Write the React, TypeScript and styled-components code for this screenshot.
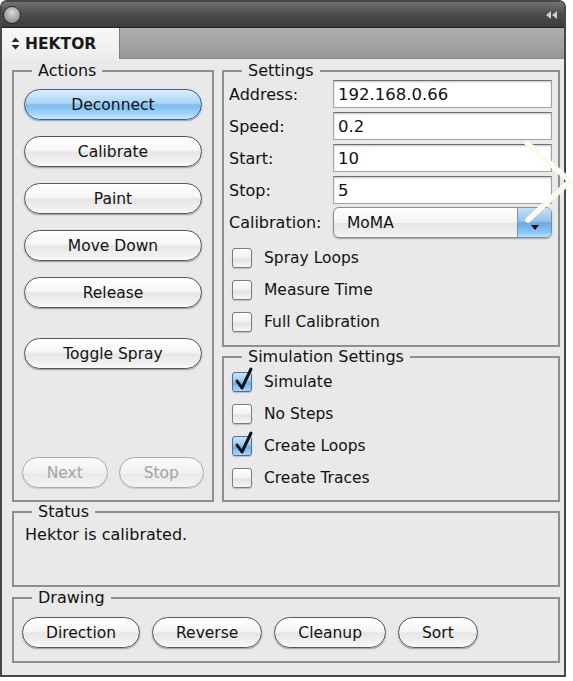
import React from 'react';
import styled, { createGlobalStyle, css } from 'styled-components';

const GlobalStyle = createGlobalStyle`
  html, body {
    margin: 0;
    padding: 0;
    background: #ffffff;
  }
  body {
    font-family: "DejaVu Sans", "Liberation Sans", sans-serif;
    color: #111;
  }
`;

const FONT = `"DejaVu Sans", "Liberation Sans", sans-serif`;

const Stage = styled.div`
  position: relative;
  width: 573px;
  height: 681px;
  overflow: hidden;
`;

const Window = styled.div`
  width: 566px;
  height: 677px;
  box-sizing: border-box;
  border: 2px solid #474747;
  border-radius: 7px 7px 0 0;
  display: flex;
  flex-direction: column;
  overflow: hidden;
  background: #e9e9e9;
`;

const TitleBar = styled.div`
  height: 26px;
  box-sizing: border-box;
  display: flex;
  align-items: center;
  justify-content: space-between;
  padding: 0 6px 0 1px;
  background: linear-gradient(#727272, #4d4d4d 45%, #3d3d3d);
  border-bottom: 1px solid #1f1f1f;
`;

const CloseDot = styled.span`
  width: 16px;
  height: 16px;
  border-radius: 50%;
  border: 1px solid #2a2a2a;
  background: radial-gradient(circle at 50% 35%, #dadada, #9a9a9a 65%, #6c6c6c);
`;

const TabStrip = styled.div`
  height: 31px;
  display: flex;
  background: linear-gradient(#b0b0b0, #979797);
  border-bottom: 1px solid #8a8a8a;
  box-sizing: border-box;
`;

const Tab = styled.div`
  width: 118px;
  display: flex;
  align-items: center;
  gap: 5px;
  padding-left: 9px;
  box-sizing: border-box;
  background: linear-gradient(#f8f8f8, #ececec);
  border-right: 1px solid #7c7c7c;
  margin-bottom: -1px;
  font: bold 15.5px ${FONT};
  color: #1a1a1a;
`;

const Panel = styled.div`
  flex: 1;
  display: flex;
  flex-direction: column;
  padding: 3px 4px 0 10px;
`;

const TopRow = styled.div`
  display: grid;
  grid-template-columns: 202px 338px;
  column-gap: 8px;
  height: 440px;
`;

const RightColumn = styled.div`
  display: flex;
  flex-direction: column;
  gap: 1px;
`;

const Group = styled.fieldset<{ $height?: number; $gapAbove?: number; $grow?: boolean }>`
  margin: ${p => p.$gapAbove ?? 0}px 0 0 0;
  padding: 0;
  min-width: 0;
  border: 2px solid #8e8e8e;
  display: flex;
  flex-direction: column;
  box-sizing: border-box;
  ${p => p.$grow && css`flex: 1;`}
  ${p =>
    p.$height !== undefined &&
    css`
      height: ${p.$height}px;
    `}
`;

const Legend = styled.legend`
  margin-left: 18px;
  padding: 0 6px;
  font: 16px/18px ${FONT};
  color: #111;
`;

const GroupBody = styled.div<{ $pad: string; $gap?: number }>`
  flex: 1;
  display: flex;
  flex-direction: column;
  padding: ${p => p.$pad};
  gap: ${p => p.$gap ?? 0}px;
`;

const PillButton = styled.button<{ $primary?: boolean; $wide?: boolean; $spaced?: boolean }>`
  height: 31px;
  padding: 0 23px;
  ${p => p.$wide && css`width: 100%;`}
  ${p => p.$spaced && css`margin-top: 14px;`}
  border-radius: 16px;
  border: 1px solid #575757;
  font: 15.5px ${FONT};
  color: #121212;
  cursor: pointer;
  background: linear-gradient(#ffffff 0%, #f6f6f6 45%, #e6e6e6 52%, #f1f1f1 85%, #fafafa 100%);
  box-shadow: 0 1px 1.5px rgba(0, 0, 0, 0.35);
  ${p =>
    p.$primary &&
    css`
      border-color: #3d5e8e;
      background: linear-gradient(#d9eefc 0%, #a9d5f6 45%, #7cbdf0 52%, #9fd1f7 80%, #c9ecfd 100%);
    `}
  &:disabled {
    color: #a2a2a2;
    border-color: #ababab;
    background: linear-gradient(#fbfbfb, #f1f1f1 50%, #eaeaea 52%, #f2f2f2);
    box-shadow: 0 1px 1px rgba(0, 0, 0, 0.12);
    cursor: default;
  }
`;

const ButtonPair = styled.div`
  margin: auto -2px 0 -2px;
  display: grid;
  grid-template-columns: 1fr 1fr;
  gap: 11px;
`;

const FormGrid = styled.div`
  display: grid;
  grid-template-columns: 104px 219px;
  grid-auto-rows: 28px;
  row-gap: 4px;
  align-items: center;
`;

const FieldLabel = styled.label`
  font: 16px ${FONT};
  color: #111;
`;

const Field = styled.input`
  height: 28px;
  width: 100%;
  box-sizing: border-box;
  border: 1px solid #a3a3a3;
  border-top-color: #707070;
  box-shadow: inset 0 1px 2px rgba(0, 0, 0, 0.25);
  background: #fff;
  padding: 0 4px;
  font: 16.5px ${FONT};
  color: #111;
  outline: none;
`;

const PopupRow = styled.div`
  display: grid;
  grid-template-columns: 104px 219px;
  align-items: center;
  margin-top: 3px;
`;

const Popup = styled.div`
  height: 31px;
  display: flex;
  box-sizing: border-box;
  border: 1px solid #8a8a8a;
  border-radius: 6px;
  overflow: hidden;
  box-shadow: 0 1px 1.5px rgba(0, 0, 0, 0.3);
  background: linear-gradient(#ffffff, #f3f3f3 50%, #e4e4e4 52%, #f4f4f4);
`;

const PopupValue = styled.span`
  flex: 1;
  display: flex;
  align-items: center;
  padding-left: 13px;
  font: 15.5px ${FONT};
  color: #111;
`;

const PopupArrow = styled.span`
  width: 34px;
  display: flex;
  align-items: flex-end;
  justify-content: center;
  padding-bottom: 7px;
  box-sizing: border-box;
  border-left: 1px solid #6f9ac7;
  background: linear-gradient(#c6e1f8 0%, #94c4ef 45%, #6aa8e4 52%, #8cc7f3 85%, #b8e2fc 100%);
`;

const CheckList = styled.div<{ $top?: number }>`
  display: flex;
  flex-direction: column;
  margin-top: ${p => p.$top ?? 0}px;
  padding-left: 3px;
`;

const CheckRow = styled.label`
  height: 32px;
  display: flex;
  align-items: center;
  gap: 12px;
  font: 15.5px ${FONT};
  color: #111;
`;

const Box = styled.span<{ $checked?: boolean }>`
  position: relative;
  width: 20px;
  height: 20px;
  box-sizing: border-box;
  border-radius: 3px;
  border: 1px solid #7b7b7b;
  background: linear-gradient(#ffffff, #f1f1f1 50%, #e3e3e3 55%, #f6f6f6);
  box-shadow: 0 1px 1px rgba(0, 0, 0, 0.2);
  ${p =>
    p.$checked &&
    css`
      border-color: #47709e;
      background: linear-gradient(#cbe5fa, #8ec4f0 50%, #6aaee8 55%, #a8d8fa);
    `}
`;

const CheckMark = styled.svg`
  position: absolute;
  left: 1px;
  top: -6px;
  overflow: visible;
`;

const StatusText = styled.div`
  padding: 5px 0 0 11px;
  font: 16px/18px ${FONT};
  color: #111;
`;

const DrawingRow = styled.div`
  display: flex;
  gap: 12px;
  padding: 10px 0 0 8px;
`;

const Overlay = styled.svg`
  position: absolute;
  left: 0;
  top: 0;
  pointer-events: none;
`;

const TabIcon = () => (
  <svg width="9" height="13" viewBox="0 0 9 13">
    <path d="M4.5 0.5 L8.5 5 L0.5 5 Z M4.5 12.5 L8.5 8 L0.5 8 Z" fill="#2a2a2a" />
  </svg>
);

const CollapseIcon = () => (
  <svg width="12" height="8" viewBox="0 0 12 8">
    <path d="M0 4 L5 0 L5 8 Z M6 4 L11 0 L11 8 Z" fill="#cfcfcf" />
  </svg>
);

const Check: React.FC<{ label: string; checked?: boolean }> = ({ label, checked }) => (
  <CheckRow>
    <Box $checked={checked}>
      {checked && (
        <CheckMark width="20" height="24" viewBox="0 0 20 24">
          <path
            d="M3 14 L8 21 L17 2"
            fill="none"
            stroke="#111"
            strokeWidth="3"
            strokeLinecap="round"
            strokeLinejoin="round"
          />
        </CheckMark>
      )}
    </Box>
    {label}
  </CheckRow>
);

const actions = ['Calibrate', 'Paint', 'Move Down', 'Release'];
const fields = [
  ['Address:', '192.168.0.66'],
  ['Speed:', '0.2'],
  ['Start:', '10'],
  ['Stop:', '5'],
];

const App: React.FC = () => (
  <Stage>
    <GlobalStyle />
    <Window>
      <TitleBar>
        <CloseDot />
        <CollapseIcon />
      </TitleBar>
      <TabStrip>
        <Tab>
          <TabIcon />
          HEKTOR
        </Tab>
      </TabStrip>
      <Panel>
        <TopRow>
          <Group>
            <Legend>Actions</Legend>
            <GroupBody $pad="9px 10px 12px 10px" $gap={16}>
              <PillButton $primary $wide>Deconnect</PillButton>
              {actions.map(a => (
                <PillButton key={a} $wide>{a}</PillButton>
              ))}
              <PillButton $wide $spaced>Toggle Spray</PillButton>
              <ButtonPair>
                <PillButton disabled>Next</PillButton>
                <PillButton disabled>Stop</PillButton>
              </ButtonPair>
            </GroupBody>
          </Group>
          <RightColumn>
            <Group $height={285}>
              <Legend>Settings</Legend>
              <GroupBody $pad="0 5px 7px 5px">
                <FormGrid>
                  {fields.map(([l, v]) => (
                    <React.Fragment key={l}>
                      <FieldLabel>{l}</FieldLabel>
                      <Field readOnly defaultValue={v} />
                    </React.Fragment>
                  ))}
                </FormGrid>
                <PopupRow>
                  <FieldLabel>Calibration:</FieldLabel>
                  <Popup>
                    <PopupValue>MoMA</PopupValue>
                    <PopupArrow>
                      <svg width="8" height="5" viewBox="0 0 8 5">
                        <path d="M0 0 L8 0 L4 5 Z" fill="#111" />
                      </svg>
                    </PopupArrow>
                  </Popup>
                </PopupRow>
                <CheckList $top={4}>
                  <Check label="Spray Loops" />
                  <Check label="Measure Time" />
                  <Check label="Full Calibration" />
                </CheckList>
              </GroupBody>
            </Group>
            <Group $grow>
              <Legend>Simulation Settings</Legend>
              <GroupBody $pad="0 5px 6px 5px">
                <CheckList>
                  <Check label="Simulate" checked />
                  <Check label="No Steps" />
                  <Check label="Create Loops" checked />
                  <Check label="Create Traces" />
                </CheckList>
              </GroupBody>
            </Group>
          </RightColumn>
        </TopRow>
        <Group $height={84} $gapAbove={1}>
          <Legend>Status</Legend>
          <StatusText>Hektor is calibrated.</StatusText>
        </Group>
        <Group $height={74} $gapAbove={2}>
          <Legend>Drawing</Legend>
          <DrawingRow>
            <PillButton>Direction</PillButton>
            <PillButton>Reverse</PillButton>
            <PillButton>Cleanup</PillButton>
            <PillButton>Sort</PillButton>
          </DrawingRow>
        </Group>
      </Panel>
    </Window>
    <Overlay width="573" height="681" viewBox="0 0 573 681">
      <polyline
        points="527,143 570,181 528,220"
        fill="none"
        stroke="#fbfbee"
        strokeWidth="5.5"
        strokeLinecap="round"
        strokeLinejoin="miter"
      />
    </Overlay>
  </Stage>
);

export default App;
